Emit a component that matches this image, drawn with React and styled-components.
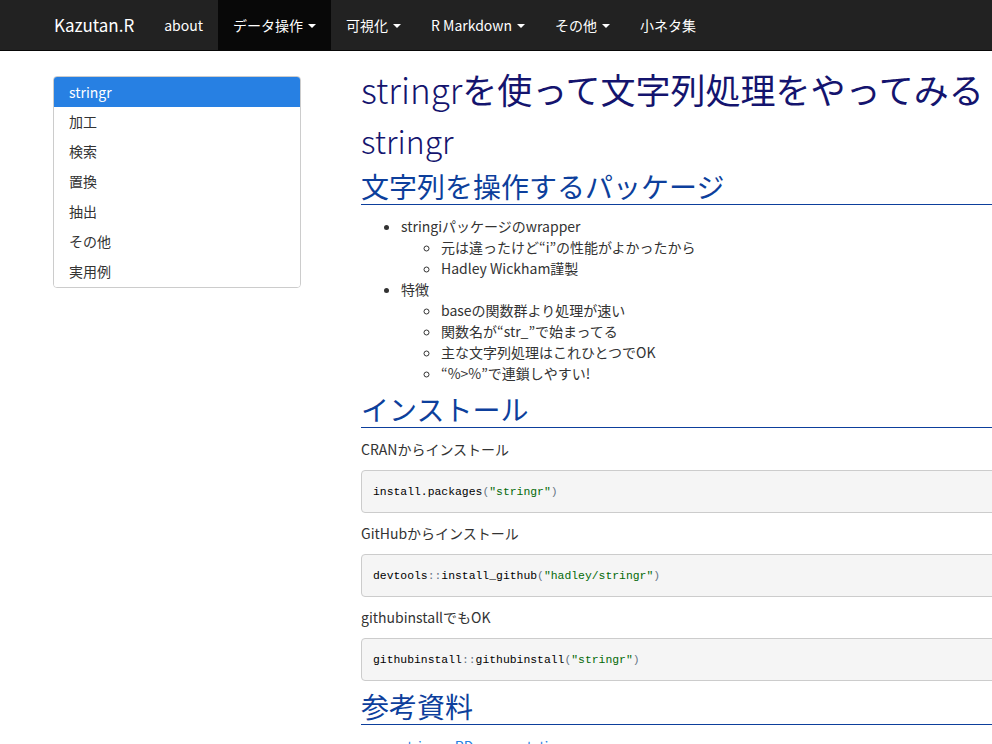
import React from 'react';
import styled, { createGlobalStyle } from 'styled-components';

const GlobalStyle = createGlobalStyle`
  html, body {
    margin: 0;
    padding: 0;
    overflow: hidden;
  }
  body {
    background: #fff;
    color: #333;
    font-family: "Noto Sans CJK JP", "Noto Sans", sans-serif;
    font-size: 14px;
    line-height: 21px;
  }
`;

const Navbar = styled.div`
  height: 50px;
  background: #222;
  border-bottom: 1px solid #080808;
  display: flex;
  align-items: stretch;
  padding-left: 38px;
`;

const Brand = styled.a`
  color: #fff;
  font-size: 17px;
  line-height: 50px;
  padding: 0 15px 0 16px;
  text-decoration: none;
`;

const NavItem = styled.a`
  color: #fff;
  font-size: 14px;
  line-height: 50px;
  padding: 0 15px;
  display: flex;
  align-items: center;
  gap: 5px;
  background: ${p => (p.$active ? '#080808' : 'transparent')};
  text-decoration: none;
`;

const Caret = styled.span`
  width: 0;
  height: 0;
  border-top: 4px solid #fff;
  border-left: 4px solid transparent;
  border-right: 4px solid transparent;
  margin-top: 2px;
`;

const Page = styled.div`
  display: flex;
  align-items: flex-start;
  padding-left: 53px;
  gap: 60px;
`;

const Toc = styled.ul`
  list-style: none;
  margin: 25px 0 0;
  padding: 0;
  width: 246px;
  border: 1px solid #ccc;
  border-radius: 4px;
  overflow: hidden;
  flex-shrink: 0;
`;

const TocItem = styled.li`
  padding: ${p => (p.$active ? '5px 15px' : '4px 15px 6px')};
  line-height: 20px;
  font-size: 14px;
  background: ${p => (p.$active ? '#2780e3' : '#fff')};
  color: ${p => (p.$active ? '#fff' : '#333')};
`;

const Main = styled.div`
  width: 720px;
  flex-shrink: 0;
  padding-top: 18px;
`;

const Title = styled.h1`
  font-size: 35px;
  line-height: 40px;
  font-weight: 400;
  color: #14146e;
  margin: 0 0 14px;
`;

const Light = styled.span`
  font-weight: 300;
`;

const Heading1 = styled.h1`
  font-size: 32px;
  line-height: 35px;
  font-weight: 300;
  color: #14146e;
  margin: 0 0 13px;
`;

const Heading2 = styled.h2`
  font-size: 28px;
  line-height: 31px;
  font-weight: 400;
  color: #0d3f9c;
  margin: 10px 0 11px;
  padding-bottom: 2px;
  border-bottom: 1px solid #0d3f9c;
`;

const List = styled.ul`
  margin: 0 0 10px;
  padding-left: 40px;
  list-style: ${p => (p.$nested ? 'circle' : 'disc')};
  ${p => p.$nested && 'margin-bottom: 0;'}
`;

const Para = styled.p`
  margin: 0 0 10px;
`;

const Pre = styled.pre`
  margin: 0 0 10px;
  padding: 10.5px 11px;
  background: #f5f5f5;
  border: 1px solid #ccc;
  border-radius: 4px;
  font-family: "Liberation Mono", "DejaVu Sans Mono", monospace;
  font-size: 11.4px;
  line-height: 20px;
  color: #000;
`;

const Op = styled.span`
  color: #687687;
`;

const Str = styled.span`
  color: #036a07;
`;

const Link = styled.a`
  color: #2780e3;
  text-decoration: none;
`;

const navItems = [
  { label: 'about' },
  { label: 'データ操作', caret: true, active: true },
  { label: '可視化', caret: true },
  { label: 'R Markdown', caret: true },
  { label: 'その他', caret: true },
  { label: '小ネタ集' },
];

const tocItems = ['stringr', '加工', '検索', '置換', '抽出', 'その他', '実用例'];

const Code = ({ fn, arg }) => (
  <Pre>
    {fn.map((part, i) =>
      part === '::' ? <Op key={i}>::</Op> : <span key={i}>{part}</span>
    )}
    <Op>(</Op>
    <Str>"{arg}"</Str>
    <Op>)</Op>
  </Pre>
);

export default function App() {
  return (
    <>
      <GlobalStyle />
      <Navbar>
        <Brand>Kazutan.R</Brand>
        {navItems.map(item => (
          <NavItem key={item.label} $active={item.active}>
            {item.label}
            {item.caret && <Caret />}
          </NavItem>
        ))}
      </Navbar>
      <Page>
        <Toc>
          {tocItems.map((t, i) => (
            <TocItem key={t} $active={i === 0}>{t}</TocItem>
          ))}
        </Toc>
        <Main>
          <Title><Light>stringr</Light>を使って文字列処理をやってみる</Title>
          <Heading1>stringr</Heading1>
          <Heading2>文字列を操作するパッケージ</Heading2>
          <List>
            <li>
              stringiパッケージのwrapper
              <List $nested>
                <li>元は違ったけど“i”の性能がよかったから</li>
                <li>Hadley Wickham謹製</li>
              </List>
            </li>
            <li>
              特徴
              <List $nested>
                <li>baseの関数群より処理が速い</li>
                <li>関数名が“str_”で始まってる</li>
                <li>主な文字列処理はこれひとつでOK</li>
                <li>“%&gt;%”で連鎖しやすい!</li>
              </List>
            </li>
          </List>
          <Heading2>インストール</Heading2>
          <Para>CRANからインストール</Para>
          <Code fn={['install.packages']} arg="stringr" />
          <Para>GitHubからインストール</Para>
          <Code fn={['devtools', '::', 'install_github']} arg="hadley/stringr" />
          <Para>githubinstallでもOK</Para>
          <Code fn={['githubinstall', '::', 'githubinstall']} arg="stringr" />
          <Heading2>参考資料</Heading2>
          <List>
            <li><Link>stringr - RDocumentation</Link></li>
          </List>
        </Main>
      </Page>
    </>
  );
}
